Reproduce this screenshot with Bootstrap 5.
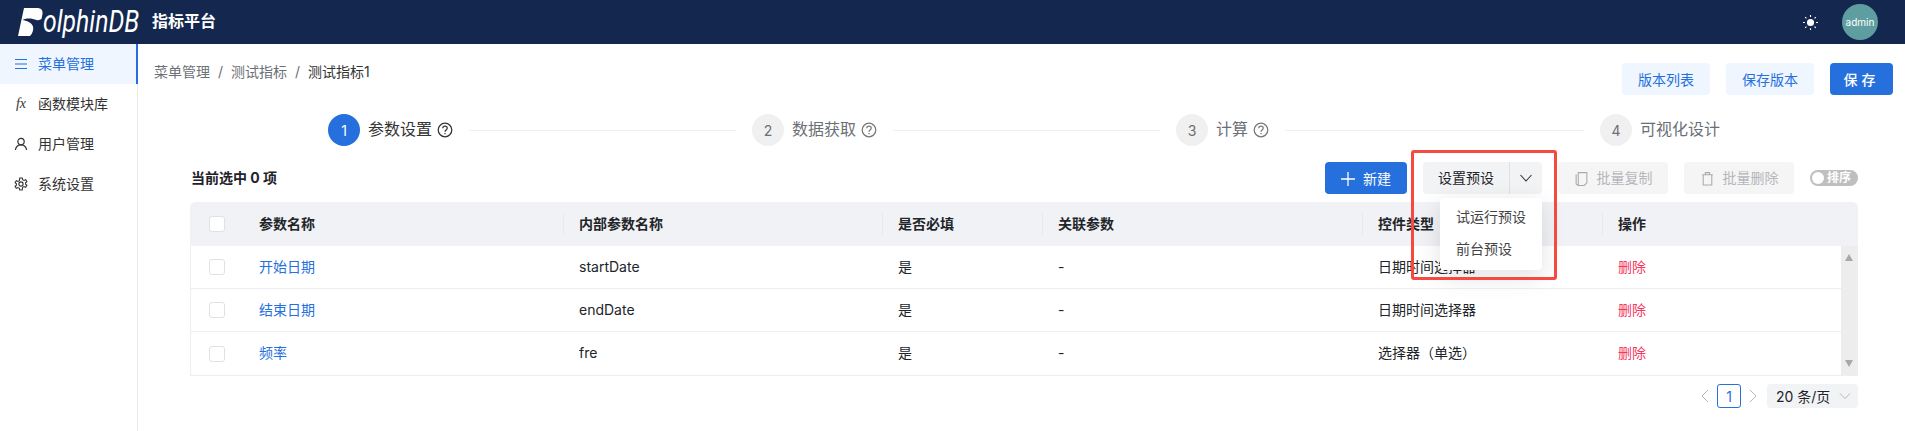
<!DOCTYPE html>
<html lang="zh">
<head>
    <meta charset="UTF-8">
    <title>指标平台</title>
    <link href="https://cdn.jsdelivr.net/npm/bootstrap@5.3.0/dist/css/bootstrap.min.css" rel="stylesheet">
    <style>
        html, body { height: 100%; overflow: hidden; }
        body { font-family: "Inter", "Noto Sans CJK SC", sans-serif; font-size: 14px; color: #1f2329; background: #fff; }
        .top-bar { height: 44px; background: #13274f; color: #fff; padding-left: 18px; }
        .brand-logo { width: 134px; height: 44px; white-space: nowrap; flex: none; }
        .brand-logo svg { width: 25px; height: 28px; flex: none; }
        .brand-word { font-family: "Roboto", "Liberation Sans", sans-serif; font-style: italic; font-weight: 400; font-size: 31px; line-height: 44px; display: inline-block; transform: scaleX(.8); transform-origin: left center; }
        .brand-name { font-size: 16px; font-weight: 700; padding-bottom: 2px; }
        .top-sun { width: 15px; height: 15px; margin-right: 24px; }
        .top-avatar { width: 36px; height: 36px; border-radius: 50%; background: #5f9ea0; font-size: 10px; margin-right: 27px; }
        .page-main { height: 387px; }
        .side-menu { width: 138px; border-right: 1px solid #e8eaed; flex: none; }
        .menu-row { height: 40px; padding-left: 14px; padding-bottom: 2px; gap: 10px; color: #333; }
        .menu-row svg { width: 14px; height: 14px; flex: none; margin-top: 2px; }
        .menu-row.is-on { background: #eff6ff; color: #2570dd; border-right: 2px solid #2570dd; margin-right: -1px; }
        .fx-mark { width: 14px; flex: none; font-family: "Liberation Serif", serif; font-style: italic; font-size: 14px; text-align: center; }
        .work-area { padding: 0 12px 0 16px; min-width: 0; }
        .head-line { height: 51px; padding-top: 19px; }
        .crumbs { color: #6b6f76; margin-top: -2px; line-height: 22px; }
        .crumbs i { font-style: normal; margin: 0 8px; }
        .crumbs b { font-weight: 400; color: #333; }
        .soft-btn { width: 88px; height: 32px; background: #eff6ff; color: #2570dd; border: 0; border-radius: 4px; font-size: 14px; margin-right: 16px; padding: 0; }
        .main-btn { background: #2570dd; color: #fff; border: 0; border-radius: 4px; height: 32px; padding: 0; font-size: 14px; }
        .save-btn { width: 63px; letter-spacing: 4px; font-weight: 500; }
        .step-line { padding-left: 174px; height: 32px; margin-top: 19px; padding-right: 173px; }
        .step-item { width: 424px; flex: none; color: #6b6f76; }
        .step-item:last-child { width: auto; }
        .step-num { width: 32px; height: 32px; border-radius: 50%; background: #f0f0f0; margin-right: 8px; flex: none; }
        .step-item.is-on { color: #333; }
        .step-item.is-on .step-num { background: #2570dd; color: #fff; }
        .step-text { font-size: 16px; padding-bottom: 2px; }
        .step-help { width: 16px; height: 16px; margin-left: 5px; flex: none; stroke-width: 1.25; }
        .step-rule { flex: 1; height: 1px; background: #eceef1; margin: 0 16px; }
        .table-zone { margin: 16px 35px 0 36px; position: relative; }
        .tool-line { height: 32px; }
        .count-text { font-weight: 700; padding: 0 0 2px 1px; }
        .new-btn { width: 82px; margin-right: 16px; }
        .new-btn svg { width: 14px; height: 14px; margin-right: 8px; vertical-align: -2px; }
        .preset-group { width: 119px; height: 32px; background: #f2f3f5; border-radius: 4px; margin-right: 16px; }
        .preset-main { width: 87px; border-right: 1px solid #dfe1e5; padding-bottom: 2px; }
        .preset-arrow { flex: 1; }
        .preset-arrow svg { width: 14px; height: 14px; }
        .off-btn { width: 110px; height: 32px; background: #f5f5f6; border-radius: 4px; color: #b5b7bb; margin-right: 16px; padding-bottom: 2px; }
        .off-btn svg { width: 15px; height: 15px; margin-right: 8px; margin-top: 2px; }
        .sort-switch { width: 48px; height: 16px; border-radius: 8px; background: #bfbfbf; color: #fff; font-size: 12px; font-weight: 700; padding-left: 2px; }
        .sort-knob { width: 12px; height: 12px; background: #fff; border-radius: 50%; margin-right: 3px; flex: none; }
        .table-shell { margin-top: 8px; border: 1px solid #eceef1; border-top: 0; border-radius: 6px 6px 0 0; }
        .table-shell .table { table-layout: fixed; margin: 0; border-collapse: separate; border-spacing: 0; }
        .table-shell .table td, .table-shell .table th { padding: 0 16px 2px; vertical-align: middle; border-color: #eceef1; color: inherit; box-shadow: none; white-space: nowrap; }
        .table-shell thead th { height: 44px; background: #f1f2f5; font-weight: 700; position: relative; border: 0; }
        .table-shell tbody td { height: 43px; }
        .table-shell tbody tr:last-child td { border-bottom: 0; }
        .head-table { border-radius: 6px 6px 0 0; overflow: hidden; margin-left: -1px; margin-right: -1px; }
        .has-split::before { content: ""; position: absolute; left: 0; top: 11px; height: 22px; width: 1px; background: #e7e9ec; }
        .col-a { width: 53px; }
        .col-b { width: 320px; }
        .col-c { width: 319px; }
        .col-d { width: 160px; }
        .col-e { width: 320px; }
        .col-f { width: 240px; }
        tbody .col-a { width: 52px; }
        .tick-box { width: 16px; height: 16px; border: 1px solid #dfe1e8; border-radius: 3px; background: #fff; display: block; margin: 2px 0 0 2px; }
        thead .tick-box { margin-left: 3px; }
        .name-link { color: #2570dd; text-decoration: none; }
        .del-link { color: #f5365c; text-decoration: none; }
        .fake-scroll { width: 16px; flex: none; background: #ededed; padding: 8px 0; }
        .fake-scroll span { width: 0; height: 0; border-left: 4.5px solid transparent; border-right: 4.5px solid transparent; }
        .fake-scroll .to-up { border-bottom: 7px solid #a8a8a8; }
        .fake-scroll .to-down { border-top: 7px solid #a8a8a8; }
        .pager-line { height: 24px; margin-top: 8px; gap: 8px; }
        .pager-arrow { width: 8px; height: 14px; }
        .pager-num { width: 24px; height: 24px; border: 1px solid #2570dd; border-radius: 3px; color: #2570dd; }
        .page-size { width: 91px; height: 24px; background: #f2f3f5; border-radius: 4px; margin-left: 2px; padding: 0 7px 0 9px; }
        .page-size svg { width: 12px; height: 12px; }
        .preset-menu { position: absolute; left: 1250px; top: 36px; width: 102px; height: 72px; background: #fff; border-radius: 4px; padding: 4px 0; box-shadow: 0 6px 24px rgba(0,0,0,.12); z-index: 5; color: #444; }
        .preset-menu div { height: 32px; line-height: 30px; padding-left: 16px; white-space: nowrap; }
        .red-frame { position: absolute; left: 1221px; top: -12px; width: 146px; height: 130px; border: 3px solid #f44a40; border-radius: 3px; z-index: 6; pointer-events: none; }
    </style>
</head>
<body>
<!-- 상단 바 -->
<header class="top-bar d-flex align-items-center">
    <div class="brand-logo d-flex align-items-center"><svg viewBox="0 0 25 28"><path fill="#fff" d="M6 0h13c4 0 6 2 5.500 6l-1 5c-1.500 1-3 1.500-5 1-4-1.500-9-2.500-14 0 4 .5 9 2.500 10.500 6.500.8 3-.5 7-3 9.500H0z"/></svg><span class="brand-word">olphinDB</span></div>
    <div class="brand-name">指标平台</div>
    <svg class="top-sun ms-auto" viewBox="0 0 16 16"><circle cx="8" cy="8" r="3.800" fill="#fff"/><path stroke="#fff" stroke-width="1.2" d="M8 0v2M8 14v2M0 8h2M14 8h2M2.300 2.300l1.400 1.400M12.300 12.300l1.400 1.400M2.300 13.700l1.400-1.400M12.300 3.700l1.400-1.400"/></svg>
    <div class="top-avatar d-flex align-items-center justify-content-center">admin</div>
</header>

<div class="page-main d-flex">
    <!-- 왼쪽 메뉴 -->
    <nav class="side-menu">
        <div class="menu-row is-on d-flex align-items-center">
            <svg viewBox="0 0 14 14" fill="none" stroke="#2570dd" stroke-width="1.2"><path d="M1 2.500h12M1 7h12M1 11.500h12"/></svg>菜单管理
        </div>
        <div class="menu-row d-flex align-items-center">
            <span class="fx-mark">fx</span>函数模块库
        </div>
        <div class="menu-row d-flex align-items-center">
            <svg viewBox="0 0 14 14" fill="none" stroke="#333" stroke-width="1.2"><circle cx="7" cy="4.600" r="3.200"/><path d="M1.400 13c.4-3 2.600-5.200 5.600-5.200s5.200 2.200 5.600 5.200"/></svg>用户管理
        </div>
        <div class="menu-row d-flex align-items-center">
            <svg viewBox="0 0 14 14" fill="none" stroke="#333" stroke-width="1.1"><circle cx="7" cy="7" r="2.100"/><path d="M5.800 1h2.400l.4 1.700 1.500.7 1.600-.8 1.200 2-1.300 1.200v1.400l1.300 1.200-1.200 2-1.600-.8-1.500.7L8.200 13H5.800l-.4-1.700-1.500-.7-1.600.8-1.200-2 1.300-1.200V6.800L1.100 5.600l1.200-2 1.600.8 1.500-.7z"/></svg>系统设置
        </div>
    </nav>

    <main class="work-area flex-grow-1">
        <div class="head-line d-flex justify-content-between">
            <div class="crumbs">菜单管理<i>/</i>测试指标<i>/</i><b>测试指标1</b></div>
            <div class="d-flex">
                <button class="soft-btn" type="button">版本列表</button>
                <button class="soft-btn" type="button">保存版本</button>
                <button class="main-btn save-btn" type="button">保存</button>
            </div>
        </div>

        <!-- 단계 표시 -->
        <div class="step-line d-flex">
            <div class="step-item is-on d-flex align-items-center">
                <span class="step-num d-flex align-items-center justify-content-center">1</span>
                <span class="step-text">参数设置</span>
                <svg class="step-help" viewBox="0 0 16 16" fill="none" stroke="#333"><circle cx="8" cy="8" r="6.800"/><path d="M5.800 6.300C5.800 5 6.800 4.200 8 4.200s2.200.8 2.200 2c0 1.700-2.200 1.700-2.200 3.500"/><path d="M8 11v1.200"/></svg>
                <span class="step-rule"></span>
            </div>
            <div class="step-item d-flex align-items-center">
                <span class="step-num d-flex align-items-center justify-content-center">2</span>
                <span class="step-text">数据获取</span>
                <svg class="step-help" viewBox="0 0 16 16" fill="none" stroke="#777"><circle cx="8" cy="8" r="6.800"/><path d="M5.800 6.300C5.800 5 6.800 4.200 8 4.200s2.200.8 2.200 2c0 1.700-2.200 1.700-2.200 3.500"/><path d="M8 11v1.200"/></svg>
                <span class="step-rule"></span>
            </div>
            <div class="step-item d-flex align-items-center">
                <span class="step-num d-flex align-items-center justify-content-center">3</span>
                <span class="step-text">计算</span>
                <svg class="step-help" viewBox="0 0 16 16" fill="none" stroke="#777"><circle cx="8" cy="8" r="6.800"/><path d="M5.800 6.300C5.800 5 6.800 4.200 8 4.200s2.200.8 2.200 2c0 1.700-2.200 1.700-2.200 3.500"/><path d="M8 11v1.200"/></svg>
                <span class="step-rule"></span>
            </div>
            <div class="step-item d-flex align-items-center">
                <span class="step-num d-flex align-items-center justify-content-center">4</span>
                <span class="step-text">可视化设计</span>
            </div>
        </div>

        <section class="table-zone">
            <div class="tool-line d-flex align-items-center">
                <div class="count-text me-auto">当前选中 0 项</div>
                <button class="main-btn new-btn" type="button"><svg viewBox="0 0 14 14" stroke="#fff" stroke-width="1.3"><path d="M7 0v14M0 7h14"/></svg>新建</button>
                <div class="preset-group d-flex">
                    <div class="preset-main d-flex align-items-center justify-content-center">设置预设</div>
                    <div class="preset-arrow d-flex align-items-center justify-content-center"><svg viewBox="0 0 14 14" fill="none" stroke="#333" stroke-width="1.1"><path d="M1.500 4l5.500 6 5.500-6"/></svg></div>
                </div>
                <div class="off-btn d-flex align-items-center justify-content-center"><svg viewBox="0 0 14 14" fill="none" stroke="#aaa"><path d="M4 1.500h8v9.500l-2.500 2.500H4zM2 3v9l2 1.500"/></svg>批量复制</div>
                <div class="off-btn d-flex align-items-center justify-content-center"><svg viewBox="0 0 14 14" fill="none" stroke="#aaa"><path d="M2 3.500h10M5 3.500V1.500h4v2M3 3.500v9.500h8V3.500"/></svg>批量删除</div>
                <div class="sort-switch d-flex align-items-center"><span class="sort-knob"></span>排序</div>
            </div>

            <div class="table-shell">
                <div class="head-table">
                    <table class="table">
                        <thead>
                        <tr>
                            <th class="col-a"><span class="tick-box"></span></th>
                            <th class="col-b">参数名称</th>
                            <th class="col-c has-split">内部参数名称</th>
                            <th class="col-d has-split">是否必填</th>
                            <th class="col-e has-split">关联参数</th>
                            <th class="col-f has-split">控件类型</th>
                            <th class="has-split">操作</th>
                        </tr>
                        </thead>
                    </table>
                </div>
                <div class="d-flex">
                    <table class="table">
                        <tbody>
                        <tr>
                            <td class="col-a"><span class="tick-box"></span></td>
                            <td class="col-b"><a class="name-link" href="#">开始日期</a></td>
                            <td class="col-c">startDate</td>
                            <td class="col-d">是</td>
                            <td class="col-e">-</td>
                            <td class="col-f">日期时间选择器</td>
                            <td><a class="del-link" href="#">删除</a></td>
                        </tr>
                        <tr>
                            <td class="col-a"><span class="tick-box"></span></td>
                            <td class="col-b"><a class="name-link" href="#">结束日期</a></td>
                            <td class="col-c">endDate</td>
                            <td class="col-d">是</td>
                            <td class="col-e">-</td>
                            <td class="col-f">日期时间选择器</td>
                            <td><a class="del-link" href="#">删除</a></td>
                        </tr>
                        <tr>
                            <td class="col-a"><span class="tick-box"></span></td>
                            <td class="col-b"><a class="name-link" href="#">频率</a></td>
                            <td class="col-c">fre</td>
                            <td class="col-d">是</td>
                            <td class="col-e">-</td>
                            <td class="col-f">选择器（单选）</td>
                            <td><a class="del-link" href="#">删除</a></td>
                        </tr>
                        </tbody>
                    </table>
                    <div class="fake-scroll d-flex flex-column align-items-center justify-content-between">
                        <span class="to-up"></span>
                        <span class="to-down"></span>
                    </div>
                </div>
            </div>

            <div class="pager-line d-flex align-items-center justify-content-end">
                <svg class="pager-arrow" viewBox="0 0 8 14" fill="none" stroke="#b5b7bb"><path d="M7 1L1 7l6 6"/></svg>
                <div class="pager-num d-flex align-items-center justify-content-center">1</div>
                <svg class="pager-arrow" viewBox="0 0 8 14" fill="none" stroke="#b5b7bb"><path d="M1 1l6 6-6 6"/></svg>
                <div class="page-size d-flex align-items-center justify-content-between">20 条/页<svg viewBox="0 0 12 12" fill="none" stroke="#b5b7bb"><path d="M1 3.500l5 5 5-5"/></svg></div>
            </div>

            <!-- 펼친 메뉴와 빨간 표시 -->
            <div class="preset-menu">
                <div>试运行预设</div>
                <div>前台预设</div>
            </div>
            <div class="red-frame"></div>
        </section>
    </main>
</div>

<script src="https://cdn.jsdelivr.net/npm/bootstrap@5.3.0/dist/js/bootstrap.bundle.min.js"></script>
</body>
</html>
